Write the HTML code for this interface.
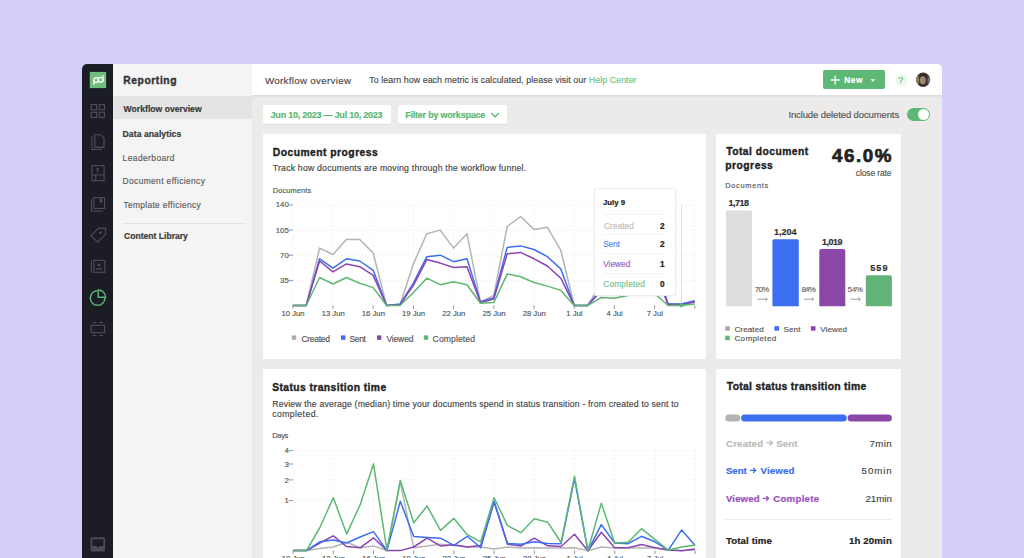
<!DOCTYPE html><html><head><meta charset="utf-8"><style>
*{margin:0;padding:0;box-sizing:border-box}
html,body{width:1024px;height:558px;overflow:hidden;background:#d5cffc;font-family:"Liberation Sans",sans-serif;color:#2a2a2a}
.abs{position:absolute}
svg.abs{left:0;top:0}
#win{position:absolute;left:82px;top:64px;width:860px;height:520px;border-radius:5px 5px 0 0;overflow:hidden;background:#ecebea}
#rail{position:absolute;left:0;top:0;width:31px;height:520px;background:#1c1d24}
#sub{position:absolute;left:31px;top:0;width:139px;height:520px;background:#f4f4f4}
#hdr{position:absolute;left:170px;top:0;width:690px;height:32px;background:#fff;border-bottom:1px solid #dddddd;box-shadow:0 1px 1.5px rgba(0,0,0,0.05)}
.t{position:absolute;white-space:nowrap;line-height:1}
.card{position:absolute;background:#fff;border-radius:1px}
</style></head><body>
<div id="win"><div id="rail"></div><div id="sub"></div><div id="hdr"></div></div>

<svg class="abs" width="1024" height="558">
<g fill="none" stroke="#4f5057" stroke-width="1.1">
 <rect x="91.3" y="104.6" width="5.2" height="5.2"/><rect x="99.2" y="104.6" width="5.2" height="5.2"/>
 <rect x="91.3" y="112.3" width="5.2" height="5.2"/><rect x="99.2" y="112.3" width="5.2" height="5.2"/>
 <path d="M92 136.5 V149.5 H101.7"/>
 <path d="M94.8 134.7 H100.5 L104 138.2 V147.4 H94.8 Z"/>
 <rect x="92" y="165.6" width="12.1" height="15.1"/>
 <path d="M92 175 H104.1 M95.7 175 V180.7 M96.2 168.8 H99 M97.6 168.8 V172.5"/>
 <path d="M91.5 199 V211 H103"/>
 <rect x="93.8" y="197.6" width="10.8" height="10.8"/>
 <path d="M98.3 228.4 H105.6 V234.3 L97.6 242.2 L91 235.6 Z" stroke-linejoin="round"/>
 <path d="M91.3 260 V272.5"/>
 <rect x="93.8" y="260.3" width="11" height="12"/>
 <path d="M96 268.9 H102" stroke-width="1.3"/>
 <rect x="91.2" y="325.3" width="13.4" height="7.4"/>
 <path d="M92.6 322.5 H96.4 M99.3 322.5 H103.1 M92.6 335.5 H96.4 M99.3 335.5 H103.1"/>
</g>
<g fill="#4f5057">
 <rect x="99.6" y="198.2" width="2.7" height="4.3"/>
 <circle cx="100.4" cy="232.8" r="1.25"/>
 <circle cx="98.9" cy="264.9" r="1.4"/>
</g>
<g fill="none" stroke="#5bb070" stroke-width="1.5">
 <path d="M97.6 290.7 A7.3 7.3 0 1 0 104.9 298"/>
 <path d="M98.2 289.9 A7.3 7.3 0 0 1 105.5 297.2 H98.2 Z"/>
</g>
<rect x="89.8" y="71.9" width="16.3" height="16.2" fill="#6fbe7d"/>
<g fill="none" stroke="#eef8f0" stroke-width="1.35">
 <path d="M93.9 85 V80"/>
 <circle cx="96.3" cy="80.1" r="2.4"/>
 <circle cx="100.6" cy="79.8" r="2.4"/>
 <path d="M103 75.3 V82"/>
</g>
<rect x="90.5" y="537.2" width="14.6" height="14.4" rx="1.5" fill="#4b4c53"/>
<path d="M92.3 539.3 H103.3 V546 H99.3 L97.8 547.5 L96.3 546 H92.3 Z" fill="#1c1d24"/>
</svg>

<div class="abs" style="left:113px;top:96px;width:139px;height:23px;background:#e4e4e4"></div>
<div class="abs" style="left:123px;top:223px;width:123px;height:1px;background:#e2e2e2"></div>
<div class="abs" style="left:823px;top:70px;width:62px;height:19px;background:#5cb874;border-radius:2px"></div>
<svg class="abs" width="1024" height="558">
<path d="M835.2 75.7 V84.4 M830.8 80 H839.7" stroke="#fff" stroke-width="1.3"/>
<path d="M870.5 79.2 H875.3 L872.9 81.7 Z" fill="#fff"/>
<circle cx="901.6" cy="79.75" r="6.3" fill="#edf7ef"/>
<defs><clipPath id="av"><circle cx="923.1" cy="79.7" r="7.1"/></clipPath></defs>
<g clip-path="url(#av)">
<rect x="915" y="72" width="17" height="16" fill="#3d3731"/>
<ellipse cx="917" cy="80" rx="2.2" ry="5" fill="#a39a78" opacity="0.7"/>
<ellipse cx="929.5" cy="81" rx="2" ry="4" fill="#7d8088" opacity="0.8"/>
<ellipse cx="922.8" cy="80.3" rx="2.9" ry="4" fill="#9c8670"/>
<path d="M919.5 77 Q922.8 73.5 926.3 77 L926 75 Q922.8 72.8 919.6 75 Z" fill="#2b2623"/>
<rect x="915" y="85.5" width="17" height="3" fill="#2e2a27"/>
</g>
</svg>
<div class="abs" style="left:263px;top:105px;width:128px;height:19px;background:#fff;border-radius:2px;box-shadow:0 1px 1px rgba(0,0,0,0.06)"></div>
<div class="abs" style="left:398px;top:105px;width:108.5px;height:19px;background:#fff;border-radius:2px;box-shadow:0 1px 1px rgba(0,0,0,0.06)"></div>
<svg class="abs" width="1024" height="558"><path d="M491.3 113 L495.1 116.8 L498.9 113" fill="none" stroke="#5cb874" stroke-width="1.3"/></svg>
<div class="abs" style="left:907px;top:108px;width:23px;height:13px;background:#5cb874;border-radius:7px"></div>
<div class="abs" style="left:917.8px;top:109.2px;width:10.8px;height:10.8px;background:#fff;border-radius:50%"></div>
<div class="card" style="left:263px;top:134px;width:442.5px;height:225px"></div>
<div class="card" style="left:716px;top:134px;width:185.3px;height:224.6px"></div>
<div class="card" style="left:263px;top:368.5px;width:442.5px;height:200px"></div>
<div class="card" style="left:716px;top:369px;width:185.3px;height:200px"></div>
<svg class="abs" width="1024" height="558"><line x1="293" y1="280.4" x2="695" y2="280.4" stroke="#efefef" stroke-width="0.8" stroke-dasharray="2 2"/><line x1="288.6" y1="280.4" x2="293" y2="280.4" stroke="#777" stroke-width="0.8"/><line x1="293" y1="255.2" x2="695" y2="255.2" stroke="#efefef" stroke-width="0.8" stroke-dasharray="2 2"/><line x1="288.6" y1="255.2" x2="293" y2="255.2" stroke="#777" stroke-width="0.8"/><line x1="293" y1="230.1" x2="695" y2="230.1" stroke="#efefef" stroke-width="0.8" stroke-dasharray="2 2"/><line x1="288.6" y1="230.1" x2="293" y2="230.1" stroke="#777" stroke-width="0.8"/><line x1="293" y1="205.0" x2="695" y2="205.0" stroke="#efefef" stroke-width="0.8" stroke-dasharray="2 2"/><line x1="288.6" y1="205.0" x2="293" y2="205.0" stroke="#777" stroke-width="0.8"/><line x1="292.8" y1="205" x2="292.8" y2="305.5" stroke="#efefef" stroke-width="0.8" stroke-dasharray="2 2"/><line x1="292.8" y1="305.5" x2="292.8" y2="308.8" stroke="#777" stroke-width="0.8"/><line x1="333.0" y1="205" x2="333.0" y2="305.5" stroke="#efefef" stroke-width="0.8" stroke-dasharray="2 2"/><line x1="333.0" y1="305.5" x2="333.0" y2="308.8" stroke="#777" stroke-width="0.8"/><line x1="373.2" y1="205" x2="373.2" y2="305.5" stroke="#efefef" stroke-width="0.8" stroke-dasharray="2 2"/><line x1="373.2" y1="305.5" x2="373.2" y2="308.8" stroke="#777" stroke-width="0.8"/><line x1="413.4" y1="205" x2="413.4" y2="305.5" stroke="#efefef" stroke-width="0.8" stroke-dasharray="2 2"/><line x1="413.4" y1="305.5" x2="413.4" y2="308.8" stroke="#777" stroke-width="0.8"/><line x1="453.6" y1="205" x2="453.6" y2="305.5" stroke="#efefef" stroke-width="0.8" stroke-dasharray="2 2"/><line x1="453.6" y1="305.5" x2="453.6" y2="308.8" stroke="#777" stroke-width="0.8"/><line x1="493.8" y1="205" x2="493.8" y2="305.5" stroke="#efefef" stroke-width="0.8" stroke-dasharray="2 2"/><line x1="493.8" y1="305.5" x2="493.8" y2="308.8" stroke="#777" stroke-width="0.8"/><line x1="534.0" y1="205" x2="534.0" y2="305.5" stroke="#efefef" stroke-width="0.8" stroke-dasharray="2 2"/><line x1="534.0" y1="305.5" x2="534.0" y2="308.8" stroke="#777" stroke-width="0.8"/><line x1="574.2" y1="205" x2="574.2" y2="305.5" stroke="#efefef" stroke-width="0.8" stroke-dasharray="2 2"/><line x1="574.2" y1="305.5" x2="574.2" y2="308.8" stroke="#777" stroke-width="0.8"/><line x1="614.4" y1="205" x2="614.4" y2="305.5" stroke="#efefef" stroke-width="0.8" stroke-dasharray="2 2"/><line x1="614.4" y1="305.5" x2="614.4" y2="308.8" stroke="#777" stroke-width="0.8"/><line x1="654.6" y1="205" x2="654.6" y2="305.5" stroke="#efefef" stroke-width="0.8" stroke-dasharray="2 2"/><line x1="654.6" y1="305.5" x2="654.6" y2="308.8" stroke="#777" stroke-width="0.8"/><line x1="694.8" y1="205" x2="694.8" y2="305.5" stroke="#efefef" stroke-width="0.8" stroke-dasharray="2 2"/><line x1="694.8" y1="305.5" x2="694.8" y2="308.8" stroke="#777" stroke-width="0.8"/><polyline points="292.8,305.5 306.2,305.5 319.6,248.1 333.0,254.5 346.4,239.5 359.8,239.5 373.2,253.1 386.6,305.5 400.0,304.8 413.4,263.9 426.8,233.7 440.2,230.1 453.6,248.1 467.0,233.7 480.4,301.9 493.8,295.4 507.2,226.5 520.6,216.5 534.0,229.4 547.4,227.3 560.8,250.2 574.2,305.5 587.6,305.5 601.0,284.0 614.4,280.4 627.8,273.2 641.2,266.0 654.6,255.2 668.0,304.1 681.4,304.1 694.8,301.2" fill="none" stroke="#b5b5b5" stroke-width="1.5" stroke-linejoin="round"/><polyline points="292.8,305.5 306.2,305.5 319.6,258.8 333.0,268.2 346.4,258.8 359.8,261.0 373.2,270.3 386.6,305.5 400.0,304.1 413.4,283.2 426.8,256.7 440.2,255.2 453.6,261.7 467.0,258.8 480.4,301.9 493.8,297.6 507.2,247.4 520.6,245.9 534.0,249.5 547.4,256.7 560.8,268.9 574.2,305.5 587.6,305.5 601.0,289.7 614.4,285.4 627.8,280.4 641.2,273.2 654.6,264.6 668.0,304.1 681.4,304.1 694.8,300.8" fill="none" stroke="#3b6ff0" stroke-width="1.5" stroke-linejoin="round"/><polyline points="292.8,305.5 306.2,305.5 319.6,261.0 333.0,271.8 346.4,263.9 359.8,266.7 373.2,275.4 386.6,305.5 400.0,304.8 413.4,285.4 426.8,259.6 440.2,263.1 453.6,267.5 467.0,266.7 480.4,302.6 493.8,299.0 507.2,253.8 520.6,252.4 534.0,258.8 547.4,266.0 560.8,278.2 574.2,305.5 587.6,305.5 601.0,291.1 614.4,287.6 627.8,284.0 641.2,276.8 654.6,268.2 668.0,304.8 681.4,304.8 694.8,301.9" fill="none" stroke="#8b44b0" stroke-width="1.5" stroke-linejoin="round"/><polyline points="292.8,305.5 306.2,305.5 319.6,277.5 333.0,284.0 346.4,277.5 359.8,283.2 373.2,287.6 386.6,305.5 400.0,305.5 413.4,292.6 426.8,278.2 440.2,284.7 453.6,281.8 467.0,284.7 480.4,303.3 493.8,302.6 507.2,273.9 520.6,276.8 534.0,282.5 547.4,286.1 560.8,290.4 574.2,305.5 587.6,305.5 601.0,297.6 614.4,298.3 627.8,295.4 641.2,294.0 654.6,293.3 668.0,305.5 681.4,305.5 694.8,304.1" fill="none" stroke="#5cb874" stroke-width="1.5" stroke-linejoin="round"/><line x1="681.5" y1="205" x2="681.5" y2="302" stroke="#d6d6d6" stroke-width="0.8"/><circle cx="681.5" cy="305.3" r="2.1" fill="#5cb874"/><rect x="291.8" y="335.4" width="4.4" height="4.4" fill="#ababab"/><rect x="341.0" y="335.4" width="4.4" height="4.4" fill="#3b6ff0"/><rect x="377.0" y="335.4" width="4.4" height="4.4" fill="#8b44b0"/><rect x="423.8" y="335.4" width="4.4" height="4.4" fill="#5cb874"/></svg>
<div class="t" style="left:250px;width:38.8px;text-align:right;top:276.8px;font-size:7.8px;color:#555;-webkit-text-stroke-width:0.15px">35</div>
<div class="t" style="left:250px;width:38.8px;text-align:right;top:251.7px;font-size:7.8px;color:#555;-webkit-text-stroke-width:0.15px">70</div>
<div class="t" style="left:250px;width:38.8px;text-align:right;top:226.5px;font-size:7.8px;color:#555;-webkit-text-stroke-width:0.15px">105</div>
<div class="t" style="left:250px;width:38.8px;text-align:right;top:201.4px;font-size:7.8px;color:#555;-webkit-text-stroke-width:0.15px">140</div>
<div class="t" style="left:273.0px;width:40px;text-align:center;top:309.8px;font-size:7.7px;color:#555;-webkit-text-stroke-width:0.15px">10 Jun</div>
<div class="t" style="left:313.2px;width:40px;text-align:center;top:309.8px;font-size:7.7px;color:#555;-webkit-text-stroke-width:0.15px">13 Jun</div>
<div class="t" style="left:353.4px;width:40px;text-align:center;top:309.8px;font-size:7.7px;color:#555;-webkit-text-stroke-width:0.15px">16 Jun</div>
<div class="t" style="left:393.6px;width:40px;text-align:center;top:309.8px;font-size:7.7px;color:#555;-webkit-text-stroke-width:0.15px">19 Jun</div>
<div class="t" style="left:433.8px;width:40px;text-align:center;top:309.8px;font-size:7.7px;color:#555;-webkit-text-stroke-width:0.15px">22 Jun</div>
<div class="t" style="left:474.0px;width:40px;text-align:center;top:309.8px;font-size:7.7px;color:#555;-webkit-text-stroke-width:0.15px">25 Jun</div>
<div class="t" style="left:514.2px;width:40px;text-align:center;top:309.8px;font-size:7.7px;color:#555;-webkit-text-stroke-width:0.15px">28 Jun</div>
<div class="t" style="left:554.4px;width:40px;text-align:center;top:309.8px;font-size:7.7px;color:#555;-webkit-text-stroke-width:0.15px">1 Jul</div>
<div class="t" style="left:594.6px;width:40px;text-align:center;top:309.8px;font-size:7.7px;color:#555;-webkit-text-stroke-width:0.15px">4 Jul</div>
<div class="t" style="left:634.8px;width:40px;text-align:center;top:309.8px;font-size:7.7px;color:#555;-webkit-text-stroke-width:0.15px">7 Jul</div>
<div class="abs" style="left:594px;top:187.5px;width:81.5px;height:108.3px;background:#fff;border:1px solid #ededed;border-radius:2px;box-shadow:0 1px 3px rgba(0,0,0,0.05)"></div>
<div class="abs" style="left:603.5px;top:214.2px;width:61.5px;height:1px;background:#f2f2f2"></div>
<div class="abs" style="left:603.5px;top:233.9px;width:61.5px;height:1px;background:#f2f2f2"></div>
<div class="abs" style="left:603.5px;top:253.4px;width:61.5px;height:1px;background:#f2f2f2"></div>
<div class="abs" style="left:603.5px;top:273.3px;width:61.5px;height:1px;background:#f2f2f2"></div>
<svg class="abs" width="1024" height="558"><path d="M725.9 306.2 V212.3 Q725.9 210.5 727.7 210.5 H750.3 Q752.1 210.5 752.1 212.3 V306.2 Z" fill="#dedede"/><path d="M772.4 306.2 V241.0 Q772.4 239.2 774.2 239.2 H797.0 Q798.8 239.2 798.8 241.0 V306.2 Z" fill="#3b6ff0"/><path d="M819.3 306.2 V250.9 Q819.3 249.1 821.1 249.1 H843.5 Q845.3 249.1 845.3 250.9 V306.2 Z" fill="#8b47a8"/><path d="M865.8 306.2 V277.0 Q865.8 275.2 867.6 275.2 H890.1 Q891.9 275.2 891.9 277.0 V306.2 Z" fill="#64b479"/><path d="M757.5 299.2 H767.3 M765.4 297.4 L767.3 299.2 L765.4 301" fill="none" stroke="#777" stroke-width="0.7"/><path d="M803.9 299.2 H813.7 M811.8 297.4 L813.7 299.2 L811.8 301" fill="none" stroke="#777" stroke-width="0.7"/><path d="M850.5 299.2 H860.3 M858.4 297.4 L860.3 299.2 L858.4 301" fill="none" stroke="#777" stroke-width="0.7"/><rect x="725.2" y="326.2" width="4.6" height="4.5" fill="#ababab"/><rect x="774.4" y="326.2" width="4.6" height="4.5" fill="#3b6ff0"/><rect x="810.9" y="326.2" width="4.6" height="4.5" fill="#8b44b0"/><rect x="725.2" y="335.7" width="4.6" height="4.5" fill="#5cb874"/></svg>
<svg class="abs" width="1024" height="558"><line x1="293" y1="500.6" x2="695" y2="500.6" stroke="#efefef" stroke-width="0.8" stroke-dasharray="2 2"/><line x1="288.6" y1="500.6" x2="293" y2="500.6" stroke="#777" stroke-width="0.8"/><line x1="293" y1="479.9" x2="695" y2="479.9" stroke="#efefef" stroke-width="0.8" stroke-dasharray="2 2"/><line x1="288.6" y1="479.9" x2="293" y2="479.9" stroke="#777" stroke-width="0.8"/><line x1="293" y1="464.0" x2="695" y2="464.0" stroke="#efefef" stroke-width="0.8" stroke-dasharray="2 2"/><line x1="288.6" y1="464.0" x2="293" y2="464.0" stroke="#777" stroke-width="0.8"/><line x1="293" y1="450.6" x2="695" y2="450.6" stroke="#efefef" stroke-width="0.8" stroke-dasharray="2 2"/><line x1="288.6" y1="450.6" x2="293" y2="450.6" stroke="#777" stroke-width="0.8"/><line x1="293.1" y1="450" x2="293.1" y2="550.6" stroke="#efefef" stroke-width="0.8" stroke-dasharray="2 2"/><line x1="293.1" y1="550.6" x2="293.1" y2="554" stroke="#777" stroke-width="0.8"/><line x1="333.3" y1="450" x2="333.3" y2="550.6" stroke="#efefef" stroke-width="0.8" stroke-dasharray="2 2"/><line x1="333.3" y1="550.6" x2="333.3" y2="554" stroke="#777" stroke-width="0.8"/><line x1="373.5" y1="450" x2="373.5" y2="550.6" stroke="#efefef" stroke-width="0.8" stroke-dasharray="2 2"/><line x1="373.5" y1="550.6" x2="373.5" y2="554" stroke="#777" stroke-width="0.8"/><line x1="413.7" y1="450" x2="413.7" y2="550.6" stroke="#efefef" stroke-width="0.8" stroke-dasharray="2 2"/><line x1="413.7" y1="550.6" x2="413.7" y2="554" stroke="#777" stroke-width="0.8"/><line x1="453.9" y1="450" x2="453.9" y2="550.6" stroke="#efefef" stroke-width="0.8" stroke-dasharray="2 2"/><line x1="453.9" y1="550.6" x2="453.9" y2="554" stroke="#777" stroke-width="0.8"/><line x1="494.1" y1="450" x2="494.1" y2="550.6" stroke="#efefef" stroke-width="0.8" stroke-dasharray="2 2"/><line x1="494.1" y1="550.6" x2="494.1" y2="554" stroke="#777" stroke-width="0.8"/><line x1="534.3" y1="450" x2="534.3" y2="550.6" stroke="#efefef" stroke-width="0.8" stroke-dasharray="2 2"/><line x1="534.3" y1="550.6" x2="534.3" y2="554" stroke="#777" stroke-width="0.8"/><line x1="574.5" y1="450" x2="574.5" y2="550.6" stroke="#efefef" stroke-width="0.8" stroke-dasharray="2 2"/><line x1="574.5" y1="550.6" x2="574.5" y2="554" stroke="#777" stroke-width="0.8"/><line x1="614.7" y1="450" x2="614.7" y2="550.6" stroke="#efefef" stroke-width="0.8" stroke-dasharray="2 2"/><line x1="614.7" y1="550.6" x2="614.7" y2="554" stroke="#777" stroke-width="0.8"/><line x1="654.9" y1="450" x2="654.9" y2="550.6" stroke="#efefef" stroke-width="0.8" stroke-dasharray="2 2"/><line x1="654.9" y1="550.6" x2="654.9" y2="554" stroke="#777" stroke-width="0.8"/><line x1="695.1" y1="450" x2="695.1" y2="550.6" stroke="#efefef" stroke-width="0.8" stroke-dasharray="2 2"/><line x1="695.1" y1="550.6" x2="695.1" y2="554" stroke="#777" stroke-width="0.8"/><polyline points="293.1,550.6 306.5,550.6 319.9,548.5 333.3,547.0 346.7,542.3 360.1,547.8 373.5,545.9 386.9,550.6 400.3,482.2 413.7,547.8 427.1,546.1 440.5,544.2 453.9,545.4 467.3,547.0 480.7,547.0 494.1,549.0 507.5,547.0 520.9,548.0 534.3,547.7 547.7,548.0 561.1,548.0 574.5,547.7 587.9,550.8 601.3,547.0 614.7,548.0 628.1,548.0 641.5,548.0 654.9,548.0 668.3,550.1 681.7,550.6 695.1,550.0" fill="none" stroke="#b5b5b5" stroke-width="1.5" stroke-linejoin="round"/><polyline points="293.1,550.6 306.5,550.6 319.9,543.0 333.3,535.8 346.7,546.6 360.1,547.8 373.5,537.8 386.9,550.6 400.3,550.6 413.7,547.0 427.1,538.2 440.5,545.9 453.9,544.7 467.3,547.0 480.7,545.4 494.1,501.7 507.5,544.2 520.9,546.1 534.3,538.2 547.7,545.8 561.1,546.5 574.5,534.2 587.9,550.8 601.3,532.2 614.7,547.7 628.1,547.7 641.5,544.6 654.9,547.7 668.3,550.1 681.7,550.8 695.1,549.0" fill="none" stroke="#8b44b0" stroke-width="1.5" stroke-linejoin="round"/><polyline points="293.1,550.6 306.5,550.6 319.9,541.8 333.3,540.1 346.7,543.0 360.1,537.0 373.5,531.6 386.9,550.6 400.3,501.3 413.7,536.6 427.1,537.5 440.5,538.2 453.9,545.4 467.3,536.3 480.7,547.7 494.1,501.7 507.5,543.4 520.9,544.2 534.3,541.8 547.7,543.4 561.1,543.7 574.5,478.6 587.9,550.8 601.3,524.6 614.7,543.0 628.1,543.7 641.5,536.3 654.9,541.8 668.3,550.1 681.7,529.9 695.1,545.4" fill="none" stroke="#3b6ff0" stroke-width="1.5" stroke-linejoin="round"/><polyline points="293.1,550.6 306.5,550.6 319.9,527.5 333.3,497.7 346.7,533.9 360.1,504.9 373.5,463.9 386.9,550.1 400.3,480.5 413.7,522.7 427.1,506.0 440.5,530.4 453.9,518.4 467.3,534.7 480.7,541.8 494.1,497.7 507.5,525.6 520.9,532.7 534.3,518.7 547.7,522.2 561.1,542.5 574.5,476.2 587.9,550.8 601.3,503.2 614.7,543.0 628.1,542.3 641.5,528.7 654.9,539.4 668.3,550.1 681.7,547.0 695.1,544.9" fill="none" stroke="#5cb874" stroke-width="1.5" stroke-linejoin="round"/></svg>
<div class="t" style="left:250px;width:38.8px;text-align:right;top:497.3px;font-size:7.8px;color:#555;-webkit-text-stroke-width:0.15px">1</div>
<div class="t" style="left:250px;width:38.8px;text-align:right;top:476.6px;font-size:7.8px;color:#555;-webkit-text-stroke-width:0.15px">2</div>
<div class="t" style="left:250px;width:38.8px;text-align:right;top:460.7px;font-size:7.8px;color:#555;-webkit-text-stroke-width:0.15px">3</div>
<div class="t" style="left:250px;width:38.8px;text-align:right;top:447.3px;font-size:7.8px;color:#555;-webkit-text-stroke-width:0.15px">4</div>
<div class="t" style="left:273.3px;width:40px;text-align:center;top:555.2px;font-size:7.7px;color:#555;-webkit-text-stroke-width:0.15px">10 Jun</div>
<div class="t" style="left:313.5px;width:40px;text-align:center;top:555.2px;font-size:7.7px;color:#555;-webkit-text-stroke-width:0.15px">13 Jun</div>
<div class="t" style="left:353.7px;width:40px;text-align:center;top:555.2px;font-size:7.7px;color:#555;-webkit-text-stroke-width:0.15px">16 Jun</div>
<div class="t" style="left:393.9px;width:40px;text-align:center;top:555.2px;font-size:7.7px;color:#555;-webkit-text-stroke-width:0.15px">19 Jun</div>
<div class="t" style="left:434.1px;width:40px;text-align:center;top:555.2px;font-size:7.7px;color:#555;-webkit-text-stroke-width:0.15px">22 Jun</div>
<div class="t" style="left:474.3px;width:40px;text-align:center;top:555.2px;font-size:7.7px;color:#555;-webkit-text-stroke-width:0.15px">25 Jun</div>
<div class="t" style="left:514.5px;width:40px;text-align:center;top:555.2px;font-size:7.7px;color:#555;-webkit-text-stroke-width:0.15px">28 Jun</div>
<div class="t" style="left:554.7px;width:40px;text-align:center;top:555.2px;font-size:7.7px;color:#555;-webkit-text-stroke-width:0.15px">1 Jul</div>
<div class="t" style="left:594.9px;width:40px;text-align:center;top:555.2px;font-size:7.7px;color:#555;-webkit-text-stroke-width:0.15px">4 Jul</div>
<div class="t" style="left:635.1px;width:40px;text-align:center;top:555.2px;font-size:7.7px;color:#555;-webkit-text-stroke-width:0.15px">7 Jul</div>
<svg class="abs" width="1024" height="558"><rect x="725.3" y="414.5" width="15" height="7" rx="3.5" fill="#b3b3b3"/><rect x="741.1" y="414.5" width="105.6" height="7" rx="3.5" fill="#3b6ff0"/><rect x="847.6" y="414.5" width="44.3" height="7" rx="3.5" fill="#8b47a8"/></svg>
<svg class="abs" width="1024" height="558"><g fill="none" stroke-width="1.2" stroke-linecap="round" stroke-linejoin="round"><path d="M767 442.9 H772.5 M770.2 440.8 L772.5 442.9 L770.2 445" stroke="#bcbcbc"/><path d="M750.3 470.4 H755.8 M753.5 468.3 L755.8 470.4 L753.5 472.5" stroke="#3b6ff0"/><path d="M763.3 498.4 H768.8 M766.5 496.3 L768.8 498.4 L766.5 500.5" stroke="#9a4fbf"/></g></svg>
<div class="abs" style="left:724.5px;top:519px;width:167.5px;height:1px;background:#ededed"></div>
<div id="t0" class="t fit" style="left:123.20px;top:76.46px;font-size:10.30px;color:#333;font-weight:bold;letter-spacing:0.587px;-webkit-text-stroke-width:0.35px;">Reporting</div>
<div id="t1" class="t fit" style="left:123.60px;top:104.88px;font-size:8.60px;color:#3a3a3a;font-weight:bold;letter-spacing:0.019px;-webkit-text-stroke-width:0.20px;">Workflow overview</div>
<div id="t2" class="t fit" style="left:122.60px;top:129.68px;font-size:8.60px;color:#3a3a3a;font-weight:bold;letter-spacing:0.062px;-webkit-text-stroke-width:0.20px;">Data analytics</div>
<div id="t3" class="t fit" style="left:122.60px;top:153.71px;font-size:8.40px;color:#5a5a5a;font-weight:normal;letter-spacing:0.440px;-webkit-text-stroke-width:0.15px;">Leaderboard</div>
<div id="t4" class="t fit" style="left:122.60px;top:177.31px;font-size:8.40px;color:#5a5a5a;font-weight:normal;letter-spacing:0.389px;-webkit-text-stroke-width:0.15px;">Document efficiency</div>
<div id="t5" class="t fit" style="left:123.40px;top:201.31px;font-size:8.40px;color:#5a5a5a;font-weight:normal;letter-spacing:0.344px;-webkit-text-stroke-width:0.15px;">Template efficiency</div>
<div id="t6" class="t fit" style="left:124.00px;top:232.48px;font-size:8.60px;color:#3a3a3a;font-weight:bold;letter-spacing:-0.007px;-webkit-text-stroke-width:0.20px;">Content Library</div>
<div id="t7" class="t fit" style="left:265.00px;top:75.53px;font-size:9.80px;color:#4a4a4a;font-weight:normal;letter-spacing:0.281px;-webkit-text-stroke-width:0.15px;">Workflow overview</div>
<div id="t8" class="t fit" style="left:369.20px;top:76.44px;font-size:8.90px;color:#4a4a4a;font-weight:normal;letter-spacing:0.052px;-webkit-text-stroke-width:0.15px;">To learn how each metric is calculated, please visit our <span style="color:#6cc488">Help Center</span></div>
<div id="t9" class="t fit" style="left:270.60px;top:111.23px;font-size:9.00px;color:#5cb874;font-weight:bold;letter-spacing:-0.235px;-webkit-text-stroke-width:0.20px;">Jun 10, 2023 — Jul 10, 2023</div>
<div id="t10" class="t fit" style="left:405.20px;top:111.23px;font-size:9.00px;color:#5cb874;font-weight:bold;letter-spacing:-0.217px;-webkit-text-stroke-width:0.20px;">Filter by workspace</div>
<div id="t11" class="t fit" style="left:844.20px;top:75.91px;font-size:8.40px;color:#fff;font-weight:bold;letter-spacing:0.500px;-webkit-text-stroke-width:0.20px;">New</div>
<div id="t12" class="t fit" style="left:898.00px;top:74.55px;font-size:9.60px;color:#5cb874;font-weight:normal;letter-spacing:0.000px;-webkit-text-stroke-width:0.15px;">?</div>
<div id="t13" class="t fit" style="left:788.40px;top:109.77px;font-size:9.50px;color:#555;font-weight:normal;letter-spacing:-0.117px;-webkit-text-stroke-width:0.15px;">Include deleted documents</div>
<div id="t14" class="t fit" style="left:272.80px;top:147.66px;font-size:10.30px;color:#222;font-weight:bold;letter-spacing:0.481px;-webkit-text-stroke-width:0.35px;">Document progress</div>
<div id="t15" class="t fit" style="left:272.80px;top:164.27px;font-size:8.70px;color:#444;font-weight:normal;letter-spacing:0.210px;-webkit-text-stroke-width:0.15px;">Track how documents are moving through the workflow funnel.</div>
<div id="t16" class="t fit" style="left:272.80px;top:186.64px;font-size:7.40px;color:#555;font-weight:normal;letter-spacing:0.113px;-webkit-text-stroke-width:0.15px;">Documents</div>
<div id="t17" class="t fit" style="left:301.40px;top:335.08px;font-size:8.60px;color:#555;font-weight:normal;letter-spacing:-0.317px;-webkit-text-stroke-width:0.15px;">Created</div>
<div id="t18" class="t fit" style="left:349.60px;top:335.08px;font-size:8.60px;color:#555;font-weight:normal;letter-spacing:-0.467px;-webkit-text-stroke-width:0.15px;">Sent</div>
<div id="t19" class="t fit" style="left:386.40px;top:335.08px;font-size:8.60px;color:#555;font-weight:normal;letter-spacing:-0.180px;-webkit-text-stroke-width:0.15px;">Viewed</div>
<div id="t20" class="t fit" style="left:432.60px;top:335.08px;font-size:8.60px;color:#555;font-weight:normal;letter-spacing:0.100px;-webkit-text-stroke-width:0.15px;">Completed</div>
<div id="t21" class="t fit" style="left:603.00px;top:198.59px;font-size:7.80px;color:#222;font-weight:bold;letter-spacing:0.000px;-webkit-text-stroke-width:0.20px;">July 9</div>
<div id="t22" class="t fit" style="left:604.00px;top:221.52px;font-size:8.30px;color:#bdbdbd;font-weight:normal;letter-spacing:0.050px;-webkit-text-stroke-width:0.15px;">Created</div>
<div id="t23" class="t fit" style="left:624.60px;width:40.00px;text-align:right;top:221.52px;font-size:8.30px;color:#222;font-weight:bold;letter-spacing:0.000px;-webkit-text-stroke-width:0.20px;">2</div>
<div id="t24" class="t fit" style="left:603.20px;top:240.12px;font-size:8.30px;color:#5a86f2;font-weight:normal;letter-spacing:-0.167px;-webkit-text-stroke-width:0.15px;">Sent</div>
<div id="t25" class="t fit" style="left:624.60px;width:40.00px;text-align:right;top:240.12px;font-size:8.30px;color:#222;font-weight:bold;letter-spacing:0.000px;-webkit-text-stroke-width:0.20px;">2</div>
<div id="t26" class="t fit" style="left:603.20px;top:260.32px;font-size:8.30px;color:#9a5ec0;font-weight:normal;letter-spacing:0.020px;-webkit-text-stroke-width:0.15px;">Viewed</div>
<div id="t27" class="t fit" style="left:624.60px;width:40.00px;text-align:right;top:260.32px;font-size:8.30px;color:#222;font-weight:bold;letter-spacing:0.000px;-webkit-text-stroke-width:0.20px;">1</div>
<div id="t28" class="t fit" style="left:603.20px;top:280.12px;font-size:8.30px;color:#72c28a;font-weight:normal;letter-spacing:0.200px;-webkit-text-stroke-width:0.15px;">Completed</div>
<div id="t29" class="t fit" style="left:624.60px;width:40.00px;text-align:right;top:280.12px;font-size:8.30px;color:#222;font-weight:bold;letter-spacing:0.000px;-webkit-text-stroke-width:0.20px;">0</div>
<div id="t30" class="t fit" style="left:726.20px;top:147.06px;font-size:10.30px;color:#222;font-weight:bold;letter-spacing:0.469px;-webkit-text-stroke-width:0.35px;">Total document</div>
<div id="t31" class="t fit" style="left:725.20px;top:161.06px;font-size:10.30px;color:#222;font-weight:bold;letter-spacing:0.514px;-webkit-text-stroke-width:0.35px;">progress</div>
<div id="t32" class="t fit" style="left:832.00px;top:146.56px;font-size:18.80px;color:#222;font-weight:bold;letter-spacing:1.525px;-webkit-text-stroke-width:0.70px;">46.0%</div>
<div id="t33" class="t fit" style="left:855.80px;top:168.90px;font-size:8.50px;color:#555;font-weight:normal;letter-spacing:-0.122px;-webkit-text-stroke-width:0.15px;">close rate</div>
<div id="t34" class="t fit" style="left:725.20px;top:182.04px;font-size:7.40px;color:#555;font-weight:normal;letter-spacing:0.713px;-webkit-text-stroke-width:0.15px;">Documents</div>
<div id="t35" class="t fit" style="left:728.40px;top:199.03px;font-size:9.00px;color:#333;font-weight:bold;letter-spacing:-0.450px;-webkit-text-stroke-width:0.20px;">1,718</div>
<div id="t36" class="t fit" style="left:774.00px;top:227.63px;font-size:9.00px;color:#333;font-weight:bold;letter-spacing:-0.025px;-webkit-text-stroke-width:0.20px;">1,204</div>
<div id="t37" class="t fit" style="left:822.00px;top:237.83px;font-size:9.00px;color:#333;font-weight:bold;letter-spacing:-0.475px;-webkit-text-stroke-width:0.20px;">1,019</div>
<div id="t38" class="t fit" style="left:870.20px;top:263.63px;font-size:9.00px;color:#333;font-weight:bold;letter-spacing:1.150px;-webkit-text-stroke-width:0.20px;">559</div>
<div id="t39" class="t fit" style="left:754.80px;top:285.56px;font-size:8.00px;color:#666;font-weight:normal;letter-spacing:-0.750px;-webkit-text-stroke-width:0.15px;">70%</div>
<div id="t40" class="t fit" style="left:801.40px;top:285.56px;font-size:8.00px;color:#666;font-weight:normal;letter-spacing:-0.750px;-webkit-text-stroke-width:0.15px;">84%</div>
<div id="t41" class="t fit" style="left:847.60px;top:285.56px;font-size:8.00px;color:#666;font-weight:normal;letter-spacing:-0.350px;-webkit-text-stroke-width:0.15px;">54%</div>
<div id="t42" class="t fit" style="left:734.40px;top:325.55px;font-size:8.10px;color:#555;font-weight:normal;letter-spacing:0.100px;-webkit-text-stroke-width:0.15px;">Created</div>
<div id="t43" class="t fit" style="left:783.40px;top:325.55px;font-size:8.10px;color:#555;font-weight:normal;letter-spacing:0.167px;-webkit-text-stroke-width:0.15px;">Sent</div>
<div id="t44" class="t fit" style="left:820.20px;top:325.55px;font-size:8.10px;color:#555;font-weight:normal;letter-spacing:0.100px;-webkit-text-stroke-width:0.15px;">Viewed</div>
<div id="t45" class="t fit" style="left:734.40px;top:335.15px;font-size:8.10px;color:#555;font-weight:normal;letter-spacing:0.337px;-webkit-text-stroke-width:0.15px;">Completed</div>
<div id="t46" class="t fit" style="left:272.20px;top:382.66px;font-size:10.30px;color:#222;font-weight:bold;letter-spacing:0.414px;-webkit-text-stroke-width:0.35px;">Status transition time</div>
<div id="t47" class="t fit" style="left:272.20px;top:400.07px;font-size:8.70px;color:#444;font-weight:normal;letter-spacing:0.170px;-webkit-text-stroke-width:0.15px;">Review the average (median) time your documents spend in status transition - from created to sent to</div>
<div id="t48" class="t fit" style="left:272.20px;top:410.07px;font-size:8.70px;color:#444;font-weight:normal;letter-spacing:0.400px;-webkit-text-stroke-width:0.15px;">completed.</div>
<div id="t49" class="t fit" style="left:272.20px;top:432.43px;font-size:7.50px;color:#555;font-weight:normal;letter-spacing:-0.300px;-webkit-text-stroke-width:0.15px;">Days</div>
<div id="t50" class="t fit" style="left:726.80px;top:382.25px;font-size:10.40px;color:#222;font-weight:bold;letter-spacing:0.278px;-webkit-text-stroke-width:0.35px;">Total status transition time</div>
<div id="t51" class="t fit" style="left:726.00px;top:438.54px;font-size:9.70px;color:#bcbcbc;font-weight:bold;letter-spacing:0.167px;-webkit-text-stroke-width:0.20px;">Created</div>
<div id="t52" class="t fit" style="left:776.20px;top:438.54px;font-size:9.70px;color:#bcbcbc;font-weight:bold;letter-spacing:0.100px;-webkit-text-stroke-width:0.20px;">Sent</div>
<div id="t53" class="t fit" style="left:869.60px;top:438.54px;font-size:9.70px;color:#444;font-weight:normal;letter-spacing:0.367px;-webkit-text-stroke-width:0.15px;">7min</div>
<div id="t54" class="t fit" style="left:726.00px;top:465.74px;font-size:9.70px;color:#3b6ff0;font-weight:bold;letter-spacing:-0.100px;-webkit-text-stroke-width:0.20px;">Sent</div>
<div id="t55" class="t fit" style="left:760.60px;top:465.74px;font-size:9.70px;color:#3b6ff0;font-weight:bold;letter-spacing:0.120px;-webkit-text-stroke-width:0.20px;">Viewed</div>
<div id="t56" class="t fit" style="left:861.60px;top:465.74px;font-size:9.70px;color:#444;font-weight:normal;letter-spacing:0.900px;-webkit-text-stroke-width:0.15px;">50min</div>
<div id="t57" class="t fit" style="left:726.00px;top:493.74px;font-size:9.70px;color:#9a4fbf;font-weight:bold;letter-spacing:0.080px;-webkit-text-stroke-width:0.20px;">Viewed</div>
<div id="t58" class="t fit" style="left:773.20px;top:493.74px;font-size:9.70px;color:#9a4fbf;font-weight:bold;letter-spacing:0.257px;-webkit-text-stroke-width:0.20px;">Complete</div>
<div id="t59" class="t fit" style="left:865.40px;top:493.74px;font-size:9.70px;color:#444;font-weight:normal;letter-spacing:0.000px;-webkit-text-stroke-width:0.15px;">21min</div>
<div id="t60" class="t fit" style="left:726.00px;top:535.74px;font-size:9.70px;color:#222;font-weight:bold;letter-spacing:0.089px;-webkit-text-stroke-width:0.20px;">Total time</div>
<div id="t61" class="t fit" style="left:849.00px;top:535.74px;font-size:9.70px;color:#222;font-weight:bold;letter-spacing:0.114px;-webkit-text-stroke-width:0.20px;">1h 20min</div>
</body></html>
